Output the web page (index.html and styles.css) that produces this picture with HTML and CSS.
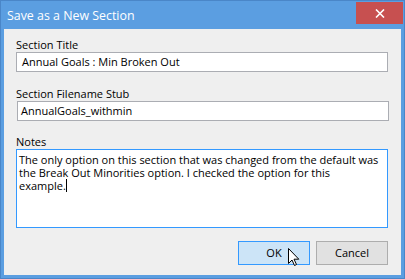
FILE: index.html
```html
<!doctype html>
<html lang="en">
<head>
	<meta charset="UTF-8">
	<title>Save as a New Section</title>
	<link rel="stylesheet" href="styles.css">
</head>
<body>
	<div class="window">
		<div class="titlebar">
			<span class="caption">Save as a New Section</span>
			<a class="close">
				<svg width="10" height="9" viewBox="0 0 10 9"><path d="M1 0.5 L9 8.5 M9 0.5 L1 8.5" stroke="#fff" stroke-width="1.6"/></svg>
			</a>
		</div>
		<div class="client">
			<label class="lbl">Section Title</label>
			<div class="field first">Annual Goals : Min Broken Out</div>
			<label class="lbl">Section Filename Stub</label>
			<div class="field second">AnnualGoals_withmin</div>
			<label class="lbl">Notes</label>
			<div class="notes">The only option on this section that was changed from the default was<br>the Break Out Minorities option. I checked the option for this<br>example.<span class="caret"></span></div>
			<div class="buttons">
				<a class="btn ok">OK</a>
				<a class="btn">Cancel</a>
			</div>
			<svg class="pointer" width="13" height="19" viewBox="0 0 13 19"><path d="M0.5 0.5 L0.5 15.5 L4 12 L6.5 17.5 L8.5 16.5 L6 11.2 L10.8 11.2 Z" fill="#fff" stroke="#000" stroke-width="1" stroke-linejoin="round"/></svg>
		</div>
	</div>
</body>
</html>
```

FILE: styles.css
```css
body{
	margin:0;
	font-family:"Open Sans","Noto Sans",sans-serif;
	font-size:11px;
	color:#000;
}
.window{
	width:403px;
	height:277px;
	border:1px solid #4a86c8;
	background:#5b9ee1;
	display:flex;
	flex-direction:column;
}
.titlebar{
	height:28px;
	display:flex;
	align-items:flex-start;
}
.caption{
	color:#fff;
	font-size:12.4px;
	margin-left:6px;
	margin-top:6px;
}
.close{
	margin-left:auto;
	margin-right:1px;
	margin-top:1px;
	width:47px;
	height:22px;
	background:#c75050;
	display:flex;
	align-items:center;
	justify-content:center;
}
.client{
	position:relative;
	flex:1;
	margin:0 3px 3px 3px;
	background:#efefef;
	padding:8px 13px 10px 12px;
	display:flex;
	flex-direction:column;
}
.lbl{
	display:block;
	height:15px;
	line-height:15px;
}
.field{
	height:20px;
	box-sizing:border-box;
	border:1px solid #abadb3;
	background:#fff;
	line-height:17px;
	padding-left:5px;
	margin-bottom:14px;
}
.field.second{
	margin-left:1px;
	margin-right:-1px;
	padding-left:3px;
	margin-bottom:13px;
}
.notes{
	height:79px;
	box-sizing:border-box;
	border:1px solid #3399ff;
	background:#fff;
	padding:3px 0 0 2px;
	line-height:13px;
	white-space:nowrap;
	margin-bottom:13px;
}
.caret{
	display:inline-block;
	width:1px;
	height:13px;
	background:#000;
	vertical-align:top;
}
.buttons{
	display:flex;
	justify-content:flex-end;
	gap:6px;
}
.btn{
	width:72px;
	height:24px;
	box-sizing:border-box;
	border:1px solid #adadad;
	background:#e1e1e1;
	text-align:center;
	line-height:22px;
}
.btn.ok{
	background:#cce4f7;
	border-color:#3399ff;
}
.pointer{
	position:absolute;
	left:284px;
	top:219px;
}
```
